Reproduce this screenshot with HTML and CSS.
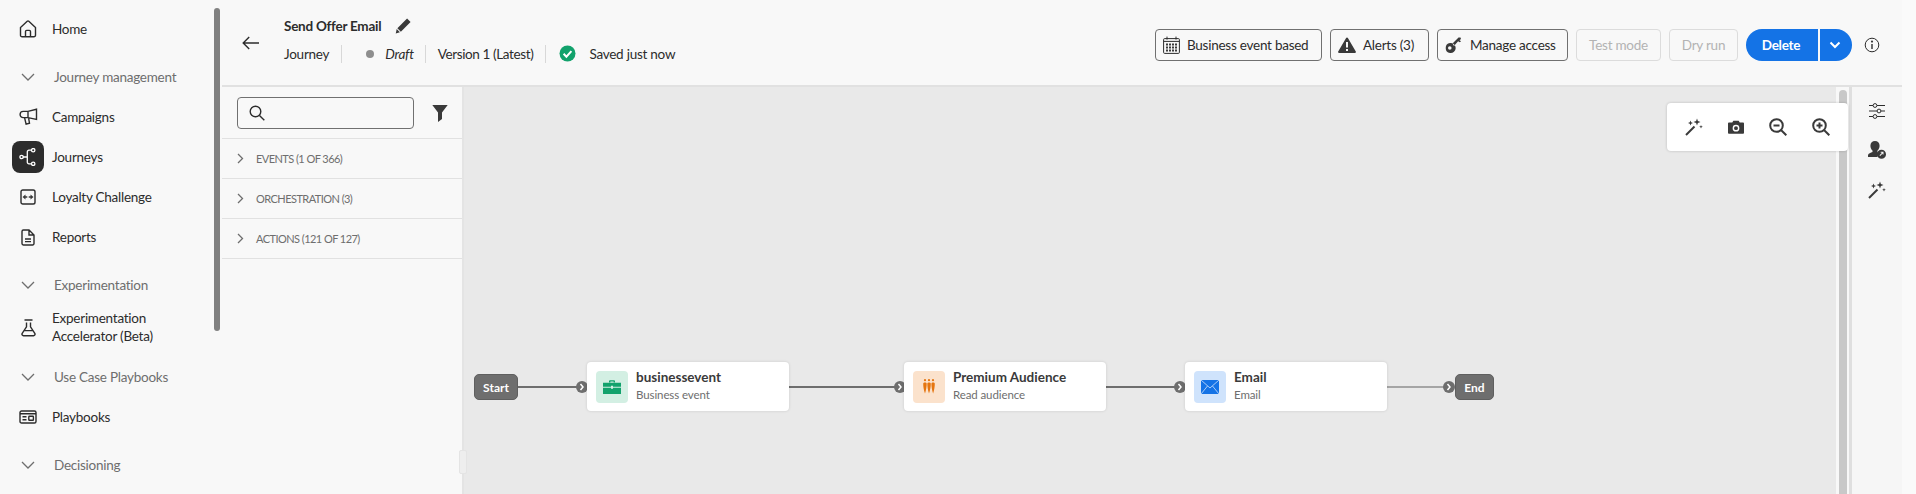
FILE: index.html
```html
<!DOCTYPE html>
<html lang="en">
<head>
<meta charset="utf-8">
<title>Send Offer Email</title>
<link rel="stylesheet" href="styles.css">
</head>
<body>
<aside class="sidenav">
  <nav class="navlist">
    <a class="item first"><span class="ico"><svg width="18" height="18" viewBox="0 0 18 18"><path d="M1.500 7.600v7.600a1.600 1.600 0 0 0 1.600 1.600h11.800a1.600 1.600 0 0 0 1.600-1.600V7.600L9.800 1.300a1.200 1.200 0 0 0-1.600 0z M6.500 16.600v-5a1.200 1.200 0 0 1 1.200-1.200h2.600a1.200 1.200 0 0 1 1.200 1.200v5" class="ln"/></svg></span><span class="lbl">Home</span></a>
    <div class="head"><span class="ico"><svg width="14" height="8" viewBox="0 0 14 8"><path d="M1 1l6 6 6-6" class="ln-g"/></svg></span><span class="lbl">Journey management</span></div>
    <a class="item"><span class="ico"><svg width="19" height="18" viewBox="0 0 19 18"><path d="M17.500 1.200v10.200L9 9.600H4.200a3 3 0 0 1 0-6.200H9z M9 3.400v6.200 M5.600 9.800l1.500 6.400 3.400-1-.9-5" class="ln"/></svg></span><span class="lbl">Campaigns</span></a>
    <a class="item active"><span class="ico dark"><svg width="18" height="18" viewBox="0 0 18 18"><path d="M3.800 9h4.200M12.500 2.200h-2.600A1.600 1.600 0 0 0 8.300 3.800v10.400a1.600 1.600 0 0 0 1.600 1.600h2.600" class="ln-w"/><circle cx="2.600" cy="9" r="1.700" class="ln-w"/><circle cx="14.200" cy="2.200" r="1.700" class="ln-w"/><circle cx="14.200" cy="15.800" r="1.700" class="ln-w"/></svg></span><span class="lbl">Journeys</span></a>
    <a class="item"><span class="ico"><svg width="16" height="16" viewBox="0 0 16 16"><rect x="1" y="1" width="14" height="14" rx="1.800" class="ln"/><path d="M2.500 8l3-2.500v1.800h1.800v1.400H5.500v1.800z M13.500 8l-3-2.500v1.800H8.700v1.400h1.800v1.800z" class="fl"/></svg></span><span class="lbl">Loyalty Challenge</span></a>
    <a class="item"><span class="ico"><svg width="14" height="17" viewBox="0 0 14 17"><path d="M1 2.400A1.400 1.400 0 0 1 2.400 1H8l5 5v8.600a1.400 1.400 0 0 1-1.400 1.400H2.400A1.400 1.400 0 0 1 1 14.600z M8 1v5h5 M4 10h6M4 12.600h6" class="ln"/></svg></span><span class="lbl">Reports</span></a>
    <div class="head"><span class="ico"><svg width="14" height="8" viewBox="0 0 14 8"><path d="M1 1l6 6 6-6" class="ln-g"/></svg></span><span class="lbl">Experimentation</span></div>
    <a class="item tall"><span class="ico"><svg width="15" height="18" viewBox="0 0 15 18"><path d="M3.500 1h8M5.500 3.500v4.300L1.200 14.400a1.500 1.500 0 0 0 1.300 2.300h10a1.500 1.500 0 0 0 1.300-2.300L9.500 7.800V3.500 M3.500 11.600h8" class="ln"/></svg></span><span class="lbl">Experimentation<br>Accelerator (Beta)</span></a>
    <div class="head"><span class="ico"><svg width="14" height="8" viewBox="0 0 14 8"><path d="M1 1l6 6 6-6" class="ln-g"/></svg></span><span class="lbl">Use Case Playbooks</span></div>
    <a class="item"><span class="ico"><svg width="18" height="14" viewBox="0 0 18 14"><rect x="1" y="1" width="16" height="12" rx="1.600" class="ln"/><path d="M1 3.800h16M3.500 6.800h4M3.500 9.800h4" class="ln"/><rect x="9.800" y="6.300" width="4.600" height="4" rx=".6" class="ln"/></svg></span><span class="lbl">Playbooks</span></a>
    <div class="head"><span class="ico"><svg width="14" height="8" viewBox="0 0 14 8"><path d="M1 1l6 6 6-6" class="ln-g"/></svg></span><span class="lbl">Decisioning</span></div>
  </nav>
  <div class="navscroll"></div>
</aside>

<main class="main">
  <header class="topbar">
    <button class="back"><svg width="18" height="14" viewBox="0 0 18 14"><path d="M17 7H1.500M7.200 1L1.200 7l6 6" class="ln"/></svg></button>
    <div class="titles">
      <div class="titlerow"><strong>Send Offer Email</strong><svg width="17" height="17" viewBox="0 0 18 18"><path d="M12.800 1.500l3.700 3.700L6.200 15.500l-3.700-3.700z M1.800 12.800l3.400 3.400-4.400 1.200z" class="fl"/></svg></div>
      <div class="metarow">
        <span>Journey</span><i class="sep s1"></i>
        <b class="dot"></b><em>Draft</em><i class="sep s2"></i>
        <span class="ver">Version 1 (Latest)</span><i class="sep"></i>
        <svg class="check" width="17" height="17" viewBox="0 0 17 17"><circle cx="8.500" cy="8.500" r="8" fill="#12a26c"/><path d="M4.600 8.800l2.800 2.900 5-5.600" fill="none" stroke="#fff" stroke-width="2"/></svg>
        <span>Saved just now</span>
      </div>
    </div>
    <div class="actions">
      <button class="btn b1"><svg width="17" height="18" viewBox="0 0 17 18"><rect x=".6" y="2.600" width="15.800" height="14.800" rx="1" class="ln1"/><path d="M4 .6v3M13 .6v3M.6 5.400h15.800" class="ln1"/><path d="M3 7.500h2v2H3zM6 7.500h2v2H6zM9 7.500h2v2H9zM12 7.500h2v2h-2zM3 10.500h2v2H3zM6 10.500h2v2H6zM9 10.500h2v2H9zM12 10.500h2v2h-2zM3 13.500h2v2H3zM6 13.500h2v2H6zM9 13.500h2v2H9zM12 13.500h2v2h-2z" class="fl"/></svg><span class="lbl">Business event based</span></button>
      <button class="btn b2"><svg width="18" height="16" viewBox="0 0 18 16"><path fill-rule="evenodd" d="M9 .5a1 1 0 0 1 .9.5l7.900 13.400a1 1 0 0 1-.9 1.500H1.100a1 1 0 0 1-.9-1.500L8.100 1A1 1 0 0 1 9 .5zM8 5v5.500h2V5zM8 12v2h2v-2z" class="fl"/></svg><span class="lbl">Alerts (3)</span></button>
      <button class="btn b3"><svg width="18" height="16" viewBox="0 0 18 16"><path fill-rule="evenodd" d="M5 6a5 5 0 1 1 0 9.900A5 5 0 0 1 5 6zm-.2 3.200a1.800 1.800 0 1 0 0 3.600 1.800 1.800 0 0 0 0-3.600zM7.500 6.500L13.500.5l2 0 .5 1.500-1.500 1.300 1.600 1-1.500 1-1.500-1L9 9z" class="fl"/></svg><span class="lbl">Manage access</span></button>
      <button class="btn off t"><span class="lbl">Test mode</span></button>
      <button class="btn off d"><span class="lbl">Dry run</span></button>
      <div class="split">
        <button class="primary"><span class="lbl">Delete</span></button>
        <button class="caret"><svg width="12" height="8" viewBox="0 0 12 8"><path d="M1.500 1.500L6 6l4.500-4.500" fill="none" stroke="#fff" stroke-width="2"/></svg></button>
      </div>
      <button class="info"><svg width="16" height="16" viewBox="0 0 16 16"><circle cx="8" cy="8" r="6.800" class="ln1"/><path d="M8 7v5" class="ln"/><circle cx="8" cy="4.600" r="1.100" class="fl"/></svg></button>
    </div>
  </header>

  <div class="workspace">
    <section class="palette">
      <div class="searchrow">
        <div class="search"><svg width="16" height="16" viewBox="0 0 16 16"><circle cx="6.500" cy="6.500" r="5.300" class="ln"/><path d="M10.500 10.500l4.800 4.800" class="ln"/></svg></div>
        <svg class="filter" width="16" height="17" viewBox="0 0 16 17"><path d="M.3 0h15.400L10 7.500V14l-4 3V7.500z" class="fl"/></svg>
      </div>
      <div class="group"><svg width="7" height="11" viewBox="0 0 7 11"><path d="M1 1l4.500 4.500L1 10" class="ln-g"/></svg>EVENTS (1 OF 366)</div>
      <div class="group"><svg width="7" height="11" viewBox="0 0 7 11"><path d="M1 1l4.500 4.500L1 10" class="ln-g"/></svg>ORCHESTRATION (3)</div>
      <div class="group"><svg width="7" height="11" viewBox="0 0 7 11"><path d="M1 1l4.500 4.500L1 10" class="ln-g"/></svg>ACTIONS (121 OF 127)</div>
    </section>

    <section class="canvas">
      <div class="handle"></div>

      <div class="wire w1"></div>
      <div class="wire w2"></div>
      <div class="wire w3"></div>
      <div class="wire w4"></div>
      <div class="port p1"><svg width="6" height="8" viewBox="0 0 6 8"><path d="M1.500 1l2.500 3-2.500 3" class="ln-p"/></svg></div>
      <div class="port p2"><svg width="6" height="8" viewBox="0 0 6 8"><path d="M1.500 1l2.500 3-2.500 3" class="ln-p"/></svg></div>
      <div class="port p3"><svg width="6" height="8" viewBox="0 0 6 8"><path d="M1.500 1l2.500 3-2.500 3" class="ln-p"/></svg></div>
      <div class="port p4"><svg width="6" height="8" viewBox="0 0 6 8"><path d="M1.500 1l2.500 3-2.500 3" class="ln-p"/></svg></div>

      <div class="term start">Start</div>
      <div class="term end">End</div>

      <div class="node n1">
        <span class="tile green"><svg width="18" height="14" viewBox="0 0 18 14"><path d="M6 2.500V1.200A1 1 0 0 1 7 .2h4a1 1 0 0 1 1 1v1.300h-1.400v-.9H7.400v.9z" fill="#12a26c"/><path d="M0 2.800h18v3.900H10v-1H8v1H0z M0 7.700h8v1h2v-1h8V14H0z" fill="#12a26c"/></svg></span>
        <span class="txt"><b>businessevent</b><small>Business event</small></span>
      </div>
      <div class="node n2">
        <span class="tile orange"><svg width="12" height="15" viewBox="0 0 12 15"><circle cx="2" cy="1.200" r="1.100" fill="#e5750f"/><circle cx="6" cy="1.200" r="1.100" fill="#e5750f"/><circle cx="10" cy="1.200" r="1.100" fill="#e5750f"/><path d="M.2 4.500c0-1.500 3.500-1.500 3.500 0 0 3-.6 7-1.700 10C.8 11.500.2 7.500.2 4.500z M4.300 4.500c0-1.500 3.500-1.500 3.500 0 0 3-.6 7-1.800 10-1.100-3-1.700-7-1.700-10z M8.400 4.500c0-1.500 3.400-1.500 3.400 0 0 3-.6 7-1.700 10-1.100-3-1.700-7-1.700-10z" fill="#e5750f"/></svg></span>
        <span class="txt"><b>Premium Audience</b><small>Read audience</small></span>
      </div>
      <div class="node n3">
        <span class="tile blue"><svg width="18" height="14" viewBox="0 0 18 14"><rect width="18" height="14" fill="#1473e6"/><path d="M0 0l9 8 9-8M0 14l6.500-8M18 14l-6.500-8" fill="none" stroke="#cfe3fc" stroke-width=".8"/></svg></span>
        <span class="txt"><b>Email</b><small>Email</small></span>
      </div>

      <div class="zoombar">
        <svg width="18" height="18" viewBox="0 0 18 18"><path d="M1 17L9.500 8.500" class="ln2"/><path d="M12 .5l.9 2.600L15.500 4l-2.600.9L12 7.500l-.9-2.600L8.500 4l2.600-.9zM5.500 2.500l.7 1.800L8 5l-1.800.7L5.500 7.500l-.7-1.800L3 5l1.800-.7zM16 7l.5 1.300 1.300.5-1.300.5L16 10.600l-.5-1.300-1.300-.5 1.300-.5z" class="fl"/></svg>
        <svg width="16" height="14" viewBox="0 0 18 15"><path fill-rule="evenodd" d="M6 .5h6l1.200 2H17a1 1 0 0 1 1 1V14a1 1 0 0 1-1 1H1a1 1 0 0 1-1-1V3.500a1 1 0 0 1 1-1h3.800zM9 5a3.800 3.800 0 1 0 0 7.600A3.800 3.800 0 0 0 9 5zm0 1.600a2.200 2.200 0 1 1 0 4.400 2.200 2.200 0 0 1 0-4.400z" class="fl"/></svg>
        <svg width="18" height="18" viewBox="0 0 18 18"><circle cx="7.500" cy="7.500" r="6.300" class="ln2"/><path d="M12 12l5.300 5.300" class="ln2"/><path d="M4.500 7.500h6" class="ln2"/></svg>
        <svg width="18" height="18" viewBox="0 0 18 18"><circle cx="7.500" cy="7.500" r="6.300" class="ln2"/><path d="M12 12l5.300 5.300" class="ln2"/><path d="M4.500 7.500h6M7.500 4.500v6" class="ln2"/></svg>
      </div>
    </section>

    <div class="vtrack"><div class="vthumb"></div></div>

    <aside class="rail">
      <svg width="16" height="16" viewBox="0 0 16 16"><path d="M0 2.500h4M8 2.500h8M0 8h8M12 8h4M0 13.500h4M8 13.500h8" class="ln1"/><circle cx="6" cy="2.500" r="1.900" class="ln1"/><circle cx="10" cy="8" r="1.900" class="ln1"/><circle cx="6" cy="13.500" r="1.900" class="ln1"/></svg>
      <svg width="18" height="18" viewBox="0 0 18 18"><path d="M7 0c2.700 0 4.600 2 4.600 4.800 0 2-.9 3.800-2.100 4.800v1.600c.7.300 1.500.6 2.200 1a5.200 5.200 0 0 0-2.300 3.800H0v-1.700c0-1.600 3-2.700 4.500-3.200V9.600C3.300 8.600 2.400 6.800 2.400 4.800 2.400 2 4.300 0 7 0z" class="fl"/><path fill-rule="evenodd" d="M13.500 8.800a4.500 4.500 0 1 1 0 9 4.500 4.500 0 0 1 0-9zm-2 5.400l2.500-2.500-1.300 0v-.9h2.800v2.800h-.9v-1.200l-2.400 2.500z" class="fl"/></svg>
      <svg width="18" height="18" viewBox="0 0 18 18"><path d="M1 17L9.500 8.500" class="ln2"/><path d="M12 .5l.9 2.600L15.500 4l-2.600.9L12 7.500l-.9-2.600L8.500 4l2.600-.9zM5.500 2.500l.7 1.800L8 5l-1.800.7L5.500 7.500l-.7-1.800L3 5l1.800-.7zM16 7l.5 1.300 1.300.5-1.300.5L16 10.600l-.5-1.300-1.300-.5 1.300-.5z" class="fl"/></svg>
    </aside>
  </div>
</main>
</body>
</html>
```
FILE: styles.css
```css
* { box-sizing: border-box; }
html, body { margin: 0; height: 494px; overflow: hidden; }
body {
  display: flex;
  background: #fafafa;
  color: #2c2c2c;
  font-family: "Lato", "Liberation Sans", sans-serif;
  font-size: 13.500px;
  letter-spacing: -0.25px;
}
button { font: inherit; letter-spacing: inherit; background: none; border: 0; padding: 0; color: inherit; }
svg { display: block; flex: none; }
.lbl { margin-bottom: 1px; }

.ln  { fill: none; stroke: #2c2c2c; stroke-width: 1.400; }
.ln1 { fill: none; stroke: #2c2c2c; stroke-width: 1; }
.ln2 { fill: none; stroke: #3a3a3a; stroke-width: 2; }
.ln-g { fill: none; stroke: #6e6e6e; stroke-width: 1.300; }
.ln-w { fill: none; stroke: #fff; stroke-width: 1.300; }
.ln-p { fill: none; stroke: #fff; stroke-width: 1.500; }
.fl  { fill: #3a3a3a; }

/* side navigation */
.sidenav { width: 222px; flex: none; display: flex; background: #f8f8f8; }
.navlist { width: 214px; padding-top: 9px; }
.navscroll { width: 6px; height: 323px; margin-top: 8px; border-radius: 3px; background: #808080; }
.item { display: flex; align-items: center; height: 40px; gap: 8px; color: #2c2c2c; padding-left: 12px; }
.item.first { margin-bottom: 8px; }
.item.tall { height: 45px; line-height: 18px; margin-bottom: 7px; }
.ico { width: 32px; height: 32px; display: flex; align-items: center; justify-content: center; flex: none; }
.ico.dark { background: #2c2c2c; border-radius: 8px; }
.head { display: flex; align-items: center; height: 40px; gap: 10px; padding-left: 12px; color: #6e6e6e; }
.item + .head { margin-top: 8px; }
.item.first + .head, .item.tall + .head { margin-top: 0; }

/* main column */
.main { width: 1680px; flex: none; display: flex; flex-direction: column; background: #f8f8f8; }
.topbar { height: 87px; flex: none; display: flex; align-items: center; border-bottom: 2px solid #e1e1e1; padding-right: 22px; }
.back { width: 62px; display: flex; justify-content: flex-start; padding-left: 20px; }
.titles { display: flex; flex-direction: column; padding-bottom: 6px; }
.titlerow { display: flex; align-items: center; gap: 14px; height: 20px; margin-bottom: 8px; }
.titlerow strong { font-weight: 700; }
.metarow { display: flex; align-items: center; height: 20px; }
.sep { width: 1px; height: 18px; background: #d8d8d8; margin: 0 12px; }
.sep.s1 { margin-right: 24px; }
.sep.s2 { margin-left: 11px; margin-right: 12px; }
.ver { letter-spacing: -0.38px; }
.dot { width: 8px; height: 8px; border-radius: 50%; background: #8e8e8e; margin-right: 11px; }
.metarow em { font-style: italic; }
.check { margin-right: 13px; margin-left: 1px; }

.actions { margin-left: auto; display: flex; align-items: center; gap: 8px; margin-top: 5px; }
.btn { height: 32px; padding: 0 0 0 7px; display: flex; align-items: center; gap: 7px; border: 1px solid #707070; border-radius: 4px; white-space: nowrap; color: #2c2c2c; }
.btn.off { border-color: #dcdcdc; color: #b3b3b3; padding: 0; justify-content: center; }
.b1 { width: 167px; }
.b2 { width: 99px; }
.b3 { width: 131px; }
.btn.t { width: 85px; }
.btn.d { width: 69px; }
.split { display: flex; gap: 2px; }
.primary { height: 32px; width: 72px; background: #1473e6; color: #fff; font-weight: 700; border-radius: 16px 0 0 16px; padding-right: 2px; }
.caret { height: 32px; width: 32px; background: #1473e6; border-radius: 0 16px 16px 0; display: flex; align-items: center; justify-content: center; padding-right: 3px; }
.info { margin-left: 4px; width: 16px; }

/* workspace */
.workspace { flex: 1; display: flex; min-height: 0; }
.palette { width: 242px; flex: none; border-right: 2px solid #e4e4e4; }
.searchrow { height: 52px; display: flex; align-items: center; padding-left: 15px; padding-top: 1px; border-bottom: 1px solid #e1e1e1; }
.search { width: 177px; height: 32px; border: 1px solid #707070; border-radius: 4px; display: flex; align-items: center; padding-left: 11px; }
.filter { margin-left: 18px; }
.group { height: 40px; display: flex; align-items: center; gap: 12px; padding-left: 15px; padding-bottom: 1px; border-bottom: 1px solid #e1e1e1; font-size: 11px; letter-spacing: -0.55px; color: #6e6e6e; }

.canvas { flex: 1; position: relative; background: #e9e9e9; }
.handle { position: absolute; left: -5px; top: 363px; width: 8px; height: 24px; background: #eeeeee; border-radius: 2px; border: 1px solid #e4e4e4; }
.wire { position: absolute; height: 2px; top: 299px; background: #6e6e6e; }
.w1 { left: 53px; width: 60px; }
.w2 { left: 324px; width: 108px; }
.w3 { left: 642px; width: 70px; }
.w4 { left: 923px; width: 60px; background: #a5a5a5; }
.port { position: absolute; top: 294px; width: 12px; height: 12px; border-radius: 50%; background: #6e6e6e; display: flex; align-items: center; justify-content: center; }
.p1 { left: 112px; }
.p2 { left: 430px; }
.p3 { left: 710px; }
.p4 { left: 979px; }
.term { position: absolute; top: 287px; height: 26px; border-radius: 5px; background: #6e6e6e; border: 1px solid #5f5f5f; color: #fff; font-size: 12px; font-weight: 700; letter-spacing: 0; display: flex; align-items: center; justify-content: center; }
.start { left: 10px; width: 44px; }
.end { left: 991px; width: 39px; }
.node { position: absolute; top: 275px; height: 49px; width: 202px; background: #fff; border-radius: 4px; box-shadow: 0 0 3px rgba(0,0,0,.14); display: flex; align-items: center; gap: 8px; padding-left: 9px; }
.n1 { left: 123px; }
.n2 { left: 440px; }
.n3 { left: 721px; }
.tile { height: 32px; width: 32px; border-radius: 4px; display: flex; align-items: center; justify-content: center; flex: none; }
.green { background: #d3efe3; }
.orange { background: #fbe2cc; }
.blue { background: #cfe3fc; }
.txt { display: flex; flex-direction: column; margin-top: -1px; }
.txt b { font-size: 13.500px; font-weight: 700; letter-spacing: 0; color: #3a3a3a; line-height: 17px; }
.txt small { font-size: 11.500px; letter-spacing: -0.1px; color: #6e6e6e; line-height: 17px; }

.zoombar { position: absolute; left: 1203px; top: 16px; width: 181px; height: 48px; background: #fff; border-radius: 4px; box-shadow: 0 0 3px rgba(0,0,0,.2); display: flex; align-items: center; justify-content: space-between; padding: 0 18px; z-index: 2; }

.vtrack { width: 13px; flex: none; padding: 3px 2px 0 3px; display: flex; }
.vthumb { flex: 1; border-radius: 4px 4px 0 0; background: #c8c8c8; }
.rail { width: 53px; flex: none; border-left: 3px solid #dfdfdf; background: #f6f6f6; display: flex; flex-direction: column; align-items: center; gap: 22px; padding-top: 16px; }
```
